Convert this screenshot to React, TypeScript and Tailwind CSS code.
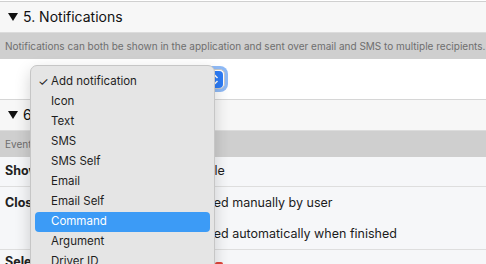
import React from "react";

const Caret = () => (
  <svg width="10" height="8" viewBox="0 0 10 8" className="shrink-0">
    <polygon points="0,0 10,0 5,8" fill="#111" />
  </svg>
);

const SectionHeader = ({ title }: { title: string }) => (
  <div className="h-[31px] flex items-center gap-[5px] pl-2 bg-[#f7f7f7] border-b border-[#dcdcdc]">
    <Caret />
    <span className="text-[14px] text-[#111] leading-none">{title}</span>
  </div>
);

const Hint = ({ text }: { text: string }) => (
  <div className="h-[26px] flex items-center pl-[5px] bg-[#cfcfcf] text-[10px] text-[#6e6e6e] whitespace-nowrap overflow-hidden">
    {text}
  </div>
);

const MENU = [
  "Add notification",
  "Icon",
  "Text",
  "SMS",
  "SMS Self",
  "Email",
  "Email Self",
  "Command",
  "Argument",
  "Driver ID",
  "Vehicle ID",
];

export default function App() {
  return (
    <div
      className="relative w-[486px] h-[264px] overflow-hidden bg-white border-t border-[#d0d0d0] mt-px"
      style={{ fontFamily: "Inter, 'Noto Sans', sans-serif" }}
    >
      <SectionHeader title="5. Notifications" />
      <Hint text="Notifications can both be shown in the application and sent over email and SMS to multiple recipients." />
      <div className="h-[41px] flex items-center pl-[40px] bg-white border-b border-[#d6d6d6]">
        <div className="w-[185px] h-[20px] flex items-center justify-between rounded-[5px] border border-[#c8c8c8] bg-white pl-2 text-[11px] shadow-[0_0_0_3px_#8fbaf6]">
          <span>Add notification</span>
          <div className="w-[17px] h-[17px] mr-px rounded-[4px] bg-[#2d7cf6] flex items-center justify-center">
            <svg width="8" height="11" viewBox="0 0 8 11">
              <polyline points="1.5,4 4,1.5 6.5,4" fill="none" stroke="#fff" strokeWidth="1.5" />
              <polyline points="1.5,7 4,9.5 6.5,7" fill="none" stroke="#fff" strokeWidth="1.5" />
            </svg>
          </div>
        </div>
      </div>
      <SectionHeader title="6. Popup" />
      <Hint text="Events can open a popup." />
      <div className="bg-[#f6f7f9] text-[12.5px] text-[#1c1c1c]">
        <div className="h-[30px] flex items-center border-b border-[#dedede]">
          <div className="w-[172px] pl-[5px] font-bold text-[#222]">Show popup</div>
          <div>Available</div>
        </div>
        <div className="h-[63px] flex border-b border-[#dedede]">
          <div className="w-[176px] pl-[5px] pt-[7px] font-bold text-[#222]">Close popup</div>
          <div className="flex flex-col pt-[7px] gap-[12px]">
            <span>Is closed manually by user</span>
            <span>Is closed automatically when finished</span>
          </div>
        </div>
        <div className="h-[30px] flex items-start pt-[3px]">
          <div className="w-[169px] pl-[5px] font-bold text-[#222]">Select sound</div>
          <div className="w-[8px] h-[4px] mt-[9px] ml-[46px] bg-[#e0463a] rounded-sm" />
        </div>
      </div>

      <div className="absolute left-[30px] top-[63px] w-[185px] h-[240px] rounded-[7px] border border-[#c6c6c6] bg-[#e5e5e5] shadow-[0_6px_16px_rgba(0,0,0,0.18)] pt-[6px] px-[4px]">
        {MENU.map((m, i) => (
          <div
            key={m}
            className={
              "h-[20px] flex items-center rounded-[4px] text-[11.5px] relative pl-[16px] " +
              (m === "Command" ? "bg-[#3c9bf6] text-white" : "text-[#1e1e1e]")
            }
          >
            {i === 0 && (
              <span className="absolute left-[3px] text-[12px] text-[#1e1e1e]">✓</span>
            )}
            {m}
          </div>
        ))}
      </div>
    </div>
  );
}
